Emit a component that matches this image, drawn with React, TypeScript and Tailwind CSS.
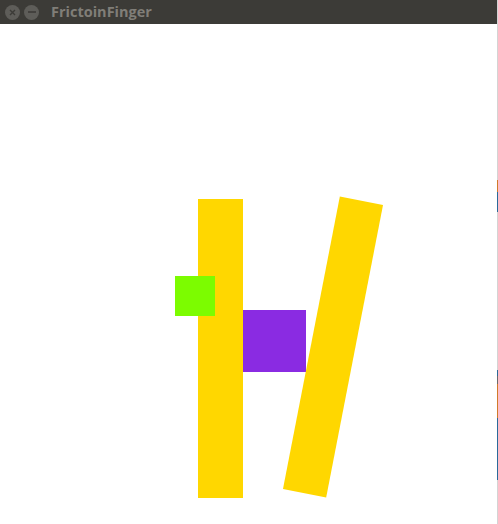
import React from 'react';

const TitleBar: React.FC = () => (
  <div className="flex h-[24px] w-[497px] items-center bg-[#3c3b37] pl-[5px]">
    <div className="flex items-center gap-[4px] pt-[-2px]">
      <span className="flex h-[15px] w-[15px] items-center justify-center rounded-full bg-[#5e5d59]">
        <svg width="7" height="7" viewBox="0 0 7 7">
          <path d="M1 1L6 6M6 1L1 6" stroke="#3c3b37" strokeWidth="1.4" />
        </svg>
      </span>
      <span className="flex h-[15px] w-[15px] items-center justify-center rounded-full bg-[#5e5d59]">
        <svg width="8" height="2" viewBox="0 0 8 2">
          <path d="M0 1H8" stroke="#3c3b37" strokeWidth="1.6" />
        </svg>
      </span>
    </div>
    <span
      className="ml-[12px] text-[14.5px] font-bold leading-none text-[#807e78]"
      style={{ fontFamily: '"Open Sans", "DejaVu Sans", sans-serif' }}
    >
      FrictoinFinger
    </span>
  </div>
);

const App: React.FC = () => {
  return (
    <div className="flex h-[524px] w-[498px] bg-white">
      <div className="flex w-[497px] flex-col">
        <TitleBar />

        {/* Simulation canvas */}
        <div className="relative flex-1 bg-white">
          <div className="absolute left-[198px] top-[175px] h-[299px] w-[45px] bg-[#ffd700]" />
          <div className="absolute left-[175px] top-[252px] h-[40px] w-[40px] bg-[#7cfc00]" />
          <div className="absolute left-[243px] top-[286px] h-[62px] w-[63px] bg-[#8a2be2]" />
          <div
            className="absolute h-[298px] w-[44px] bg-[#ffd700]"
            style={{ left: 333 - 22, top: 323 - 149, transform: 'rotate(11deg)' }}
          />
        </div>
      </div>

      {/* neighbouring window edge */}
      <div className="flex w-[1px] flex-col bg-[#d4d4d4]">
        <div className="h-[180px]" />
        <div className="h-[12px] bg-[#d07a2a]" />
        <div className="h-[20px] bg-[#2a6a9a]" />
        <div className="h-[158px]" />
        <div className="h-[6px] bg-[#2a6a9a]" />
        <div className="h-[8px] bg-[#6a6a6a]" />
        <div className="h-[34px] bg-[#d07a2a]" />
        <div className="h-[62px] bg-[#2a6a9a]" />
      </div>
    </div>
  );
};

export default App;
